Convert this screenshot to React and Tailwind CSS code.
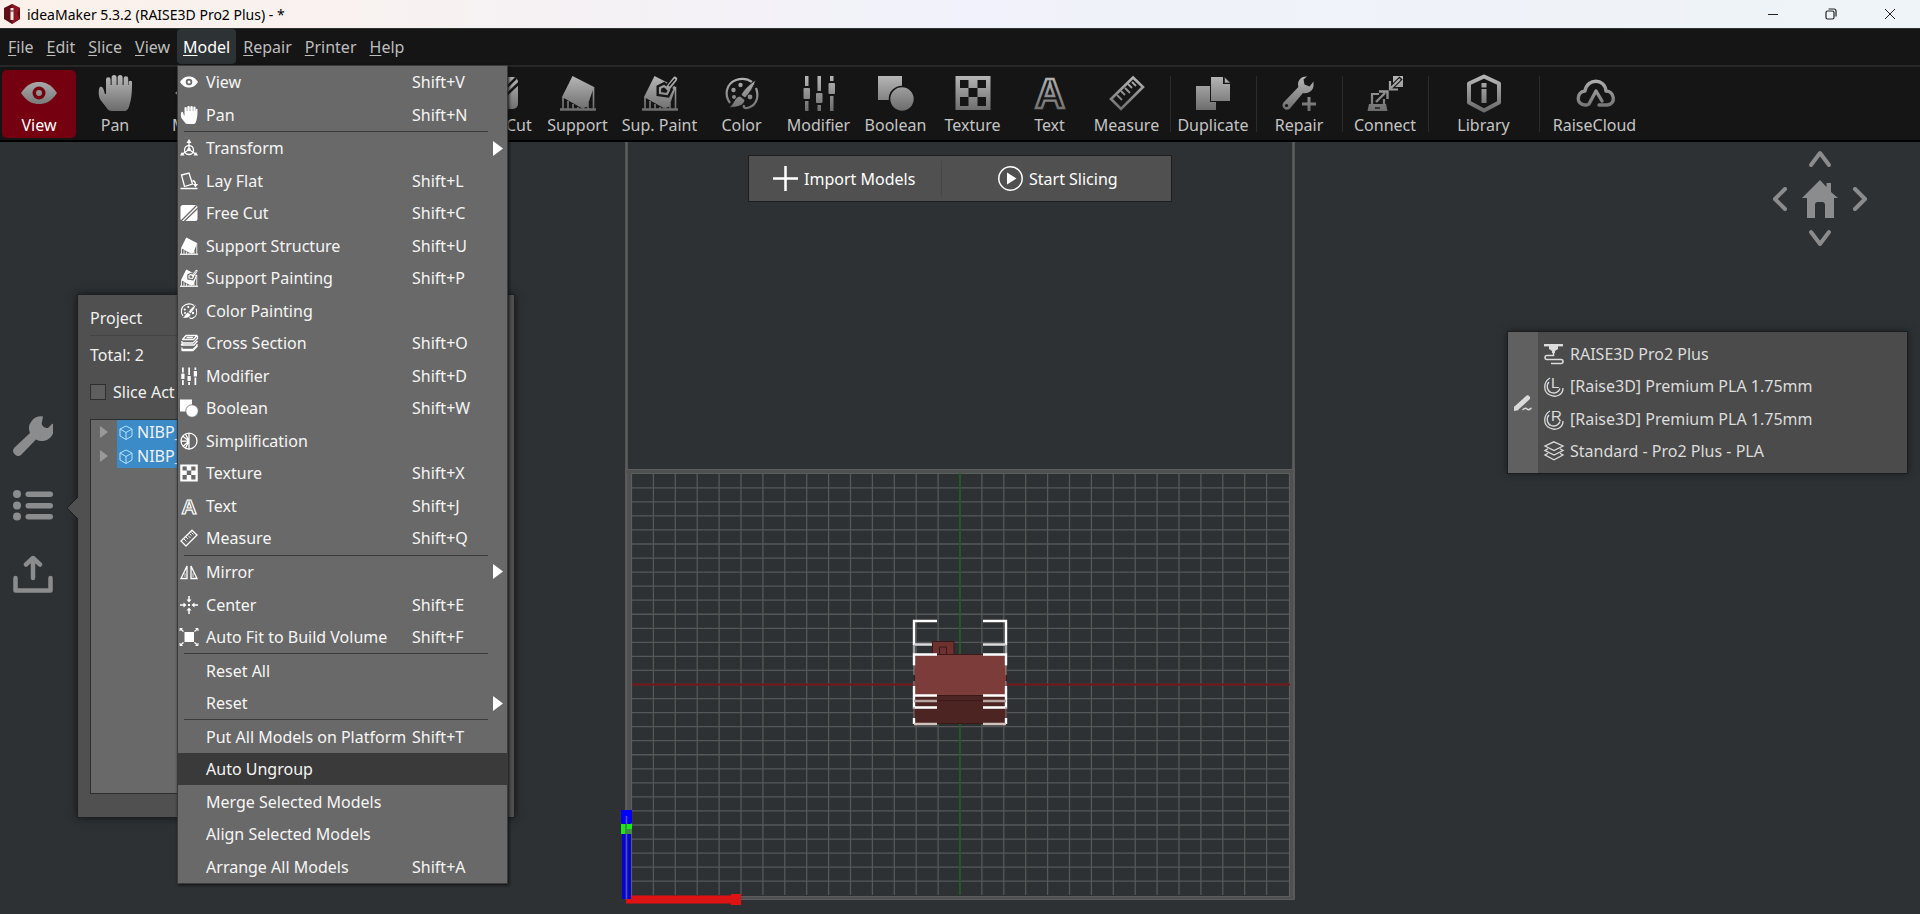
import React from 'react';
import clsx from 'clsx';

/* Icons share a 36x36 box. `c` is the paint, `k` the colour behind the icon. */
const icons = {
  view: ({ c, k }) => (
    <>
      <path d="M0 18C6 9 12 7 18 7s12 2 18 11c-6 9-12 11-18 11S6 27 0 18z" fill={c} />
      <circle cx="18" cy="18" r="6.5" fill={k} />
      <circle cx="18" cy="18" r="3" fill={c} />
    </>
  ),
  pan: ({ c }) => (
    <path
      d="M9 4.500a2.300 2.300 0 0 1 4.600 0V10h1V2.500a2.500 2.500 0 0 1 5 0V10h1V2.500a2.500 2.500 0 0 1 5 0V10h1V3.500a2.300 2.300 0 0 1 4.600 0V10h.5V6.500a2 2 0 0 1 3.300 0C35 16 35 22 32.500 30c-1 4-2.500 6-5 6H15c-3 0-4.500-1.500-6-4L3.500 25C1 21 1.500 13 3 12c2-1 3.500 1 4 4l1 3h1z"
      fill={c}
    />
  ),
  move: ({ c }) => (
    <path d="M18 0l6 7h-4v9h9v-4l7 6-7 6v-4h-9v9h4l-6 7-6-7h4v-9H7v4l-7-6 7-6v4h9V7h-4z" fill={c} />
  ),
  transform: ({ c }) => (
    <g fill="none" stroke={c} strokeWidth="2.600">
      <path d="M18 6v15L5 30M18 21l13 9" />
      <circle cx="18" cy="22" r="9" />
      <path d="M18 0l5 8H13zM0 33l4-7 5 7zM36 33l-4-7-5 7z" fill={c} stroke="none" />
      <circle cx="18" cy="21" r="3.500" fill={c} stroke="none" />
    </g>
  ),
  layFlat: ({ c }) => (
    <g fill="none" stroke={c} strokeWidth="2.600">
      <path d="M3 6l15-4 7 22-16 5z" />
      <path d="M1 33h34" strokeWidth="3" />
      <path d="M25 17c4 1 6 4 6 8" />
      <path d="M26 24h10l-5 7z" fill={c} stroke="none" />
    </g>
  ),
  freeCut: ({ c, k }) => (
    <>
      <rect x="1" y="2" width="34" height="32" rx="5" fill={c} />
      <path d="M2 34L33 3M8 35L36 8" stroke={k} strokeWidth="2.500" fill="none" />
    </>
  ),
  support: ({ c }) => (
    <>
      <path d="M12.500 1L34 12 27 32 21.500 33 2 22z" fill={c} />
      <path d="M3 22v12M8 26v8M13 29v5M18 32v2M23.500 31v3M28 28v6M33.500 12v22" stroke={c} strokeWidth="1.600" />
      <path d="M0 34.500h36" stroke={c} strokeWidth="2.400" />
    </>
  ),
  supPaint: ({ c, k }) => (
    <>
      <path d="M12.500 1L34 12 27 32 21.500 33 2 22z" fill={c} />
      <path d="M3 22v12M8 26v8M13 29v5M18 32v2M23.500 31v3M28 28v6M33.500 12v22" stroke={c} strokeWidth="1.600" />
      <path d="M0 34.500h36" stroke={c} strokeWidth="2.400" />
      <path d="M33 4L25 14M18 18v-5l4-2 5 4-2 4z" stroke={k} strokeWidth="7" fill="none" />
      <path d="M33 4L26 13" stroke={c} strokeWidth="4.500" strokeLinecap="round" />
      <path d="M33 4L27 11" stroke={k} strokeWidth="1.400" />
      <path d="M18 18v-5l4-2 5 4-2 4z" stroke={c} strokeWidth="2.200" fill="none" />
    </>
  ),
  color: ({ c, k }) => (
    <>
      <path d="M6 28C0 20 2 9 12 5c6-2 12-1 16 2M32 13c3 8 1 16-6 19-4 2-7 1-6-2" stroke={c} strokeWidth="2.200" fill="none" />
      <circle cx="9.500" cy="15" r="2.200" fill={c} />
      <circle cx="16.500" cy="10" r="2.200" fill={c} />
      <circle cx="10" cy="22" r="2" fill={c} />
      <circle cx="26" cy="22" r="2.400" fill={c} />
      <path d="M32 5c-5 3-12 9-15 15l4 3C26 18 30 11 32 5z" fill={c} stroke={k} strokeWidth="0.800" />
      <path d="M16 21l5 4c-1 6-9 8-16 7 5-2 5-10 11-11z" fill={c} stroke={k} strokeWidth="0.800" />
    </>
  ),
  crossSection: ({ c }) => (
    <g fill="none" stroke={c} strokeWidth="2.600" strokeLinejoin="round">
      <path d="M12 3h22l-7 8H5z" />
      <path d="M4 14v4h22l9-9v-5M13 7h13" />
      <path d="M2 22h26l7-8M2 22l4-3" />
      <path d="M4 27v6h22l8-8v-5" />
      <path d="M4 31h22l8-8" />
    </g>
  ),
  modifier: ({ c }) => (
    <g fill={c}>
      <path d="M4 1h3.500v10H4zM4 26h3.500v10H4zM16.500 1H20v15h-3.500zM16.500 30H20v6h-3.500zM29 1h3.500v5H29zM29 21h3.500v15H29z" />
      <rect x="2.500" y="13" width="6.500" height="11" rx="1" />
      <rect x="15" y="18" width="6.500" height="10" rx="1" />
      <rect x="27.500" y="8" width="6.500" height="11" rx="1" />
    </g>
  ),
  boolean: ({ c, k }) => (
    <>
      <rect x="0" y="1" width="24" height="24" fill={c} />
      <circle cx="24" cy="24" r="12.500" fill={c} stroke={k} strokeWidth="1.600" />
    </>
  ),
  simplification: ({ c }) => (
    <g fill="none" stroke={c} strokeWidth="2.500">
      <circle cx="18" cy="18" r="16" />
      <path d="M18 2v32M18 18L5 8M18 18L2 18M18 18L6 29M18 18L11 4M18 18l-7 14" />
    </g>
  ),
  texture: ({ c, k }) => (
    <>
      <rect x="0.500" y="1" width="35" height="34" fill={c} />
      <path d="M5 5h8.500v8H5zM22.500 5H31v8h-8.500zM13.500 13h9v9h-9zM5 22h8.500v9H5zM22.500 22H31v9h-8.500z" fill={k} />
    </>
  ),
  text: ({ c }) => (
    <text
      x="18"
      y="33"
      textAnchor="middle"
      fill="none"
      stroke={c}
      strokeWidth="2.400"
      className="font-['Liberation_Sans'] text-[42px] font-bold"
    >
      A
    </text>
  ),
  measure: ({ c }) => (
    <g fill="none" stroke={c} strokeWidth="2.600">
      <path d="M24 2.500L34 12 12 34 2 24z" />
      <path d="M8 20l5 5M12 16l4 4M16 13l5 5M19 9l4 4M23 7l4 4" strokeWidth="1.800" />
    </g>
  ),
  mirror: ({ c }) => (
    <g fill="none" stroke={c} strokeWidth="2.600">
      <path d="M14 6v25H2zM22 6v25h12z" />
      <path d="M10 20v8M26 20v8" strokeWidth="1.500" />
    </g>
  ),
  center: ({ c }) => (
    <g stroke={c} strokeWidth="3" fill={c}>
      <path d="M18 0v8M18 28v8M0 18h8M28 18h8" />
      <path d="M13 7h10l-5 6zM13 29h10l-5-6zM7 13v10l6-5zM29 13v10l-6-5z" stroke="none" />
      <path d="M16 16h4v4h-4z" stroke="none" />
    </g>
  ),
  autoFit: ({ c }) => (
    <>
      <rect x="9" y="8" width="19" height="20" fill={c} />
      <path d="M0 1l7 6M36 1l-7 6M0 35l7-6M36 35l-7-6" stroke={c} strokeWidth="2.600" />
      <path d="M0 6V1h5M36 6V1h-5M0 30v5h5M36 30v5h-5" stroke={c} strokeWidth="2" fill="none" />
    </>
  ),
  duplicate: ({ c, k }) => (
    <>
      <path d="M1 11h14v16h6v8H1z" fill={c} />
      <path d="M16 2h12v7h7v17H16z" fill={c} />
      <path d="M29.500 2l6 6h-6z" fill={c} stroke={k} strokeWidth="0.500" />
    </>
  ),
  repair: ({ c, k }) => (
    <>
      <path
        d="M26 1.500c-5-.5-9 3-9 8 0 1 .2 2 .4 2.600L2.500 27.500a4.500 4.500 0 0 0 6 6.500L22 18c5 1 10-2 10.500-7V6.500l-4 5-5-2-1-5z"
        fill={c}
      />
      <circle cx="5.500" cy="30.500" r="1.600" fill={k} />
      <path d="M28 22v14M21 29h14" stroke={c} strokeWidth="3" />
    </>
  ),
  connect: ({ c, k }) => (
    <>
      <path d="M5 29V19h7M17 24v5" stroke={c} strokeWidth="2.200" fill="none" />
      <path d="M2 29h17l1.500 7H.5z" fill={c} />
      <path d="M8 33h5" stroke={k} strokeWidth="1.400" />
      <path d="M9 27l9-9M12 16.500h8.500V24" stroke={c} strokeWidth="2.400" fill="none" />
      <path d="M26 1h10v11H26z" fill={c} />
      <path d="M34 3l-9 9" stroke={k} strokeWidth="4.500" />
      <path d="M33 4l-9 9M23 6v8.500h8" stroke={c} strokeWidth="2.200" fill="none" />
    </>
  ),
  library: ({ c }) => (
    <>
      <path d="M18 1.500L33 8.500v19L18 35.500 3 27.500v-19z" fill="none" stroke={c} strokeWidth="4" strokeLinejoin="round" />
      <rect x="15.500" y="8" width="5" height="4.500" fill={c} />
      <rect x="15.500" y="14" width="5" height="14" fill={c} />
    </>
  ),
  cloud: ({ c }) => (
    <path
      d="M10 30H8c-9 0-9-13 0-14C10 3 28 3 29 16c8 0 11 13 1 14h-8M12 29l7-13 6 10"
      fill="none"
      stroke={c}
      strokeWidth="3.400"
      strokeLinejoin="round"
      strokeLinecap="round"
    />
  ),
};

const Icon = ({ name, className, c = '#fff', k = '#696969' }) => {
  const Shape = icons[name];
  return (
    <svg viewBox="0 0 36 36" className={clsx('shrink-0 overflow-visible', className)} aria-hidden="true">
      <Shape c={c} k={k} />
    </svg>
  );
};

const menus = ['File', 'Edit', 'Slice', 'View', 'Model', 'Repair', 'Printer', 'Help'];

const modelMenu = [
  { label: 'View', keys: 'Shift+V', icon: 'view' },
  { label: 'Pan', keys: 'Shift+N', icon: 'pan' },
  null,
  { label: 'Transform', icon: 'transform', sub: true },
  { label: 'Lay Flat', keys: 'Shift+L', icon: 'layFlat' },
  { label: 'Free Cut', keys: 'Shift+C', icon: 'freeCut' },
  { label: 'Support Structure', keys: 'Shift+U', icon: 'support' },
  { label: 'Support Painting', keys: 'Shift+P', icon: 'supPaint' },
  { label: 'Color Painting', icon: 'color' },
  { label: 'Cross Section', keys: 'Shift+O', icon: 'crossSection' },
  { label: 'Modifier', keys: 'Shift+D', icon: 'modifier' },
  { label: 'Boolean', keys: 'Shift+W', icon: 'boolean' },
  { label: 'Simplification', icon: 'simplification' },
  { label: 'Texture', keys: 'Shift+X', icon: 'texture' },
  { label: 'Text', keys: 'Shift+J', icon: 'text' },
  { label: 'Measure', keys: 'Shift+Q', icon: 'measure' },
  null,
  { label: 'Mirror', icon: 'mirror', sub: true },
  { label: 'Center', keys: 'Shift+E', icon: 'center' },
  { label: 'Auto Fit to Build Volume', keys: 'Shift+F', icon: 'autoFit' },
  null,
  { label: 'Reset All' },
  { label: 'Reset', sub: true },
  null,
  { label: 'Put All Models on Platform', keys: 'Shift+T' },
  { label: 'Auto Ungroup', active: true },
  { label: 'Merge Selected Models' },
  { label: 'Align Selected Models' },
  { label: 'Arrange All Models', keys: 'Shift+A' },
];

const tools = [
  { label: 'Support', icon: 'support', width: 'w-[77px]' },
  { label: 'Sup. Paint', icon: 'supPaint', width: 'w-[87px]' },
  { label: 'Color', icon: 'color', width: 'w-[77px]' },
  { label: 'Modifier', icon: 'modifier', width: 'w-[77px]' },
  { label: 'Boolean', icon: 'boolean', width: 'w-[77px]' },
  { label: 'Texture', icon: 'texture', width: 'w-[77px]' },
  { label: 'Text', icon: 'text', width: 'w-[77px]' },
  { label: 'Measure', icon: 'measure', width: 'w-[77px]' },
];

const services = [
  { label: 'Duplicate', icon: 'duplicate', width: 'w-[86px]' },
  { label: 'Repair', icon: 'repair', width: 'w-[86px]' },
  { label: 'Connect', icon: 'connect', width: 'w-[86px]' },
  { label: 'Library', icon: 'library', width: 'w-[111px]' },
  { label: 'RaiseCloud', icon: 'cloud', width: 'w-[111px]' },
];

const TitleBar = () => (
  <header className="flex h-[28px] shrink-0 items-center bg-linear-to-r from-[#fcf1ea] via-[#f1f2fb] to-[#eef4f7] pl-[3px] text-black">
    <svg viewBox="0 0 18 20" className="h-[20px] w-[18px]" aria-hidden="true">
      <path d="M9 0l8 4v11l-8 5-8-5V4z" fill="#5e0d16" />
      <path d="M9 0l8 4-3 6 3 5-8 5z" fill="#8e1622" />
      <path d="M7.500 4h3v2.500h-3zM7.500 7.500h3V16h-3z" fill="#f4e9e6" />
    </svg>
    <h1 className="ml-[6px] pt-px text-[14px] leading-[20px]">ideaMaker 5.3.2 (RAISE3D Pro2 Plus) - *</h1>
    <div className="ml-auto flex">
      <button aria-label="Minimize" className="flex h-[28px] w-[58px] items-center justify-center">
        <svg viewBox="0 0 12 12" className="size-3"><path d="M1 6.500h10" stroke="#222" /></svg>
      </button>
      <button aria-label="Restore" className="flex h-[28px] w-[58px] items-center justify-center">
        <svg viewBox="0 0 12 12" className="size-3" fill="none" stroke="#222" strokeWidth="1.200">
          <rect x="1" y="3" width="8" height="8" rx="1.500" />
          <path d="M3.500 1H9a2 2 0 0 1 2 2v5.500" />
        </svg>
      </button>
      <button aria-label="Close" className="flex h-[28px] w-[60px] items-center justify-center">
        <svg viewBox="0 0 12 12" className="size-3"><path d="M1 1l10 10M11 1L1 11" stroke="#222" /></svg>
      </button>
    </div>
  </header>
);

const ModelMenu = () => (
  <div
    role="menu"
    className="absolute top-[36px] left-0 z-20 flex h-[819px] w-[331px] flex-col border border-[#3a3a3a] bg-[#696969] text-[#f6f6f6] shadow-[1px_1px_3px_#111]"
  >
    {modelMenu.map((item, i) =>
      item ? (
        <button
          key={item.label}
          role="menuitem"
          className={clsx('flex flex-1 items-center pr-[4px] pl-[2px] text-left', item.active && 'bg-[#3a3a3a]')}
        >
          <span className="flex w-[26px]">{item.icon && <Icon name={item.icon} className="size-[18px]" />}</span>
          <span className="w-[206px] whitespace-nowrap">{item.label}</span>
          <span className="flex-1">{item.keys}</span>
          {item.sub && (
            <svg viewBox="0 0 10 15" className="h-[15px] w-[10px]" aria-hidden="true">
              <path d="M0 0l10 7.500L0 15z" fill="#fff" />
            </svg>
          )}
        </button>
      ) : (
        <hr key={i} className="mr-[19px] ml-[6px] border-[#3c3c3c]" />
      )
    )}
  </div>
);

const MenuBar = () => (
  <nav className="flex h-[37px] shrink-0 gap-px border-t border-[#2d3330] bg-[#151515] pl-[2px] text-[#bdbdbd]">
    {menus.map((name) => {
      const open = name === 'Model';
      return (
        <div key={name} className="relative">
          <button
            className={clsx(
              'h-[35px] rounded-[4px] px-[6px]',
              open && 'bg-[#2d3235] text-white'
            )}
          >
            <span className="underline decoration-1 underline-offset-2">{name[0]}</span>
            {name.slice(1)}
          </button>
          {open && <ModelMenu />}
        </div>
      );
    })}
  </nav>
);

const Tool = ({ label, icon, width, active }) => (
  <button
    className={clsx(
      'flex h-[68px] shrink-0 flex-col items-center gap-[3px] pt-[5px] whitespace-nowrap',
      width,
      active ? 'rounded-[5px] bg-[#75000f] text-white' : 'text-[#c4c4c4]'
    )}
  >
    <Icon name={icon} c="url(#metal)" k={active ? '#75000f' : '#151515'} className="size-[36px]" />
    <span className="leading-[22px]">{label}</span>
  </button>
);

const ToolBar = () => (
  <div className="flex h-[77px] shrink-0 items-center border-t-2 border-b-2 border-t-[#272727] border-b-black bg-[#151515] pl-[2px]">
    <svg className="absolute size-0" aria-hidden="true">
      <defs>
        <linearGradient id="metal" gradientUnits="userSpaceOnUse" x1="0" y1="0" x2="0" y2="36">
          <stop offset="0" stopColor="#b8b8b8" />
          <stop offset="1" stopColor="#6c6c6c" />
        </linearGradient>
      </defs>
    </svg>
    <Tool label="View" icon="view" width="w-[74px]" active />
    <Tool label="Pan" icon="pan" width="w-[78px]" />
    <Tool label="Move" icon="move" width="w-[77px]" />
    <Tool label="Free Cut" icon="freeCut" width="ml-[231px] w-[77px]" />
    {tools.map((tool) => (
      <Tool key={tool.label} {...tool} />
    ))}
    <div className="ml-[5px] flex items-center">
      {services.map((tool) => (
        <div key={tool.label} className="flex items-center">
          <div className="-mr-px h-[56px] w-px bg-[#2b2b2b]" />
          <Tool {...tool} />
        </div>
      ))}
    </div>
  </div>
);

const steps = Array.from({ length: 29 }, (_, i) => i - 14);

/* Build volume seen from the top */
const BuildPlate = () => (
  <div className="absolute inset-0 flex justify-center overflow-hidden">
    <svg viewBox="0 1 680 772" className="h-[772px] w-[680px] shrink-0" aria-label="Build plate">
      <g stroke="#565858" strokeWidth="1.300">
        {steps.map((n) => (
          <path key={n} d={`M${340 + n * 21.9} 332V754M12 ${543.5 + n * 14.05}H670`} />
        ))}
      </g>
      <g fill="none" stroke="#5c5d5d">
        <path d="M6.500 0V758M673.500 0V758" strokeWidth="2.600" />
        <path d="M6 330H674M6 757H674" strokeWidth="4" stroke="#4f5151" />
        <path d="M10 330V757M671 330V757" strokeWidth="4" stroke="#4f5151" />
        <path d="M6 328.500H674V758.500H6z" strokeWidth="1.200" />
        <path d="M11.500 332.500H669.500V755.500H11.500z" strokeWidth="1.200" />
      </g>
      <path d="M340 332V754" stroke="#155e17" strokeWidth="1.300" />
      <path d="M12 543.500H670" stroke="#751416" strokeWidth="2" />

      {/* axes */}
      <path d="M6 754.500H111V753h10v11h-10v-1.500H6z" fill="#e31212" />
      <path d="M6 758.500H121" stroke="#c51c1c" />
      <path d="M2 669h9v89H2z" fill="#0505d2" />
      <path d="M1 669h11v13H1z" fill="#0000fa" />
      <path d="M6.500 675V758" stroke="#5555a8" strokeWidth="1.600" />
      <path d="M1 683h11v10H1z" fill="#19ea19" />
      <path d="M5 683h2v10H5zM7 688h5v5H7z" fill="#3f8f43" />

      {/* models */}
      <g stroke="#3b1918" strokeWidth="1">
        <path d="M312.500 500.500h21.500v14h-21.500z" fill="#6d312f" />
        <path d="M319.500 514v-8h7v8" fill="none" />
        <path d="M294.500 513.500h92v41h-92z" fill="#7c3c39" />
        <path d="M294.500 554.500h92v28h-92zM294.500 559.500h92" fill="#4c2422" />
      </g>
      <g fill="none" stroke="#fff" strokeWidth="2.400">
        <path d="M317 480H294v24M363 480h23v24" />
        <path d="M294 503.500h18M363 503.500h23" stroke="#dcdcdc" />
        <path d="M294 504v9M386 504v9" stroke="#a3a3a3" />
        <path d="M317 513.500H294v11M363 513.500h23v11" />
        <path d="M294 524v10M294 540v6M386 524v10M386 540v6" stroke="#a59b99" strokeWidth="1" />
        <path d="M294 545v21.500h23M386 545v21.500h-23M294 554.500h23M363 554.500h23" />
        <path d="M294 560h23M363 560h23" stroke="#b9a5a3" />
        <path d="M294 566v11M386 566v11" stroke="#8a7b79" strokeWidth="1" />
        <path d="M294 577v6M386 577v6" />
        <path d="M294 583h23M363 583h23" stroke="#cfc4bd" />
      </g>
    </svg>
  </div>
);

const SideTools = () => (
  <aside className="flex w-[40px] flex-col gap-[34px] pt-[274px] text-[#8b8c8d]">
    <button aria-label="Settings">
      <svg viewBox="0 0 40 40" className="size-[40px]" fill="currentColor">
        <path d="M30 .5a12 12 0 0 0-13 16.500L1.500 31.500a5 5 0 0 0 6.500 7.500L23 23.500A12 12 0 0 0 39.500 7.500l-4 4c-3 2-8-2-6.500-5.500z" />
      </svg>
    </button>
    <button aria-label="Project list">
      <svg viewBox="0 0 40 31" className="h-[31px] w-[40px]" fill="currentColor">
        {[4, 15.5, 26.500].map((y) => (
          <g key={y}>
            <circle cx="4" cy={y} r="4" />
            <rect x="12.500" y={y - 2.500} width="27.500" height="5.500" rx="2.700" />
          </g>
        ))}
      </svg>
    </button>
    <button aria-label="Upload">
      <svg viewBox="0 0 40 38" className="h-[38px] w-[40px]" fill="none" stroke="currentColor" strokeWidth="4.500" strokeLinecap="round" strokeLinejoin="round">
        <path d="M2.500 23v12.500h35V23M20 23V3M13 9.500L20 3l7 6.500" />
      </svg>
    </button>
  </aside>
);

const ProjectPanel = () => (
  <section className="relative mt-[152px] ml-[24px] flex h-[524px] w-[438px] flex-col border border-[#1e1f20] bg-[#505050] px-[12px] pt-[12px] pb-[23px] text-[#f0f0f0] shadow-[0_0_8px_#15181a]">
    <svg viewBox="0 0 12 24" className="absolute top-[201px] -left-[12px] h-[24px] w-[12px]" aria-hidden="true">
      <path d="M12 1L1 12l11 11" fill="#505050" stroke="#1e1f20" />
    </svg>
    <h2 className="leading-[22px]">Project</h2>
    <hr className="mt-[6px] border-[#434343]" />
    <p className="mt-[8px] leading-[22px]">Total: 2</p>
    <label className="mt-[15px] flex items-center gap-[7px] leading-[22px]">
      <input type="checkbox" className="size-[16px] appearance-none border border-[#2e2e2e] bg-[#5e5e5e]" />
      Slice Act
    </label>
    <ul className="mt-[16px] flex-1 border border-[#2e2e2e] bg-[#696969]">
      {[1, 2].map((n) => (
        <li key={n} className="flex h-[24px] items-center">
          <svg viewBox="0 0 8 12" className="mx-[9px] h-[12px] w-[8px]" aria-hidden="true">
            <path d="M0 0l8 6-8 6z" fill="#9a9a9a" />
          </svg>
          <span className="flex h-full flex-1 items-center bg-[#3b8bc9] pl-[2px]">
            <svg viewBox="0 0 14 15" className="mr-[4px] h-[15px] w-[14px]" fill="none" stroke="#b5e2ff" aria-hidden="true">
              <path d="M7 1l6 3v7l-6 3.500L1 11V4zM1 4l6 3.500L13 4M7 7.500v7" />
            </svg>
            NIBP_
          </span>
        </li>
      ))}
    </ul>
  </section>
);

const ActionBar = () => (
  <div className="absolute top-[13px] left-1/2 flex h-[47px] w-[424px] -translate-x-1/2 items-center border border-[#1c1d1e] bg-[#505050] text-white">
    <button className="flex h-full w-[192px] items-center gap-[6px] pl-[24px]">
      <svg viewBox="0 0 25 25" className="size-[25px]" aria-hidden="true">
        <path d="M12.500 0v25M0 12.500h25" stroke="#fff" strokeWidth="2.500" />
      </svg>
      Import Models
    </button>
    <div className="h-[36px] w-px bg-[#474747]" />
    <button className="flex h-full flex-1 items-center gap-[6px] pl-[56px]">
      <svg viewBox="0 0 25 25" className="size-[25px]" aria-hidden="true">
        <circle cx="12.500" cy="12.500" r="11.700" fill="none" stroke="#fff" strokeWidth="1.500" />
        <path d="M9 6.500l9.500 6-9.500 6z" fill="#fff" />
      </svg>
      Start Slicing
    </button>
  </div>
);

const Arrow = ({ label, d, className }) => (
  <button aria-label={label} className={clsx('flex justify-center', className)}>
    <svg viewBox="0 0 24 24" className="size-[24px]" fill="none" stroke="currentColor" strokeWidth="4" strokeLinecap="round" strokeLinejoin="round">
      <path d={d} />
    </svg>
  </button>
);

const ViewNav = () => (
  <div className="mr-[48px] grid w-[104px] grid-cols-[24px_1fr_24px] items-center text-[#8b8c8d]">
    <Arrow label="Up" d="M3 17l9-12 9 12" className="col-span-3" />
    <Arrow label="Left" d="M17 2L7 12l10 10" />
    <button aria-label="Home" className="my-[8px] flex justify-center">
      <svg viewBox="0 0 36 38" className="h-[38px] w-[36px]" fill="currentColor">
        <path d="M18 0l6.500 7V3H29v9l7 6h-4v20h-9V25c0-2-1-3-2.500-3h-5C14 22 13 23 13 25v13H5V18H0z" />
      </svg>
    </button>
    <Arrow label="Right" d="M7 2l10 10L7 22" />
    <Arrow label="Down" d="M3 6l9 12 9-12" className="col-span-3" />
  </div>
);

const Spool = ({ letter }) => (
  <>
    <path d="M6 2C-1 6-1 16 6 19c6 3 13 0 13-7" />
    <path d="M5 6c-3 3-2 9 2 10.500 4 1.500 8-.5 9-4" />
    <text x="7" y="12" fill="currentColor" stroke="none" className="font-['Liberation_Sans'] text-[15px]">{letter}</text>
  </>
);

const profile = [
  {
    label: 'RAISE3D Pro2 Plus',
    art: (
      <>
        <path d="M0 1.200h19" strokeWidth="2.400" />
        <path d="M5 2h9v3l-3 2v2H8V7L5 5z" fill="currentColor" stroke="none" />
        <path d="M9.500 9v2.500H3a2 2 0 0 0 0 4h14a2 2 0 0 1 0 4H7" strokeWidth="1.500" />
      </>
    ),
  },
  { label: '[Raise3D] Premium PLA 1.75mm', art: <Spool letter="L" /> },
  { label: '[Raise3D] Premium PLA 1.75mm', art: <Spool letter="R" /> },
  {
    label: 'Standard - Pro2 Plus - PLA',
    art: <path d="M10 .8l9 4.200-9 4.500-9-4.500zM4 7.800L1 9.500l9 4.500 9-4.500-3-1.700M4 12.300L1 14l9 4.800L19 14l-3-1.700" />,
  },
];

const ProfilePanel = () => (
  <section className="mt-[81px] mr-[12px] flex h-[143px] w-[401px] border border-[#1c1d1e] bg-[#4a4b4a] text-[#dcdcdc] shadow-[0_0_8px_#1a1d1f]">
    <button aria-label="Edit profile" className="flex w-[30px] items-center justify-center bg-[#5f605f]">
      <svg viewBox="0 0 18 16" className="h-[16px] w-[18px]" fill="none" stroke="#dadada" strokeLinecap="round" aria-hidden="true">
        <path d="M3 12.500L13.500 3" strokeWidth="5" />
        <path d="M0 16v-5l5 4z" fill="#dadada" stroke="none" />
        <path d="M9 14.500c2-2 3-1.500 4-.5s2.500 1 4-.7" strokeWidth="1.600" />
      </svg>
    </button>
    <ul className="flex flex-1 flex-col py-[6px] pl-[6px]">
      {profile.map((row, i) => (
        <li key={i} className="flex flex-1 items-center gap-[6px]">
          <svg viewBox="0 0 20 20" className="size-[20px] overflow-visible" fill="none" stroke="currentColor" strokeWidth="1.300" aria-hidden="true">
            {row.art}
          </svg>
          {row.label}
        </li>
      ))}
    </ul>
  </section>
);

export default function App() {
  return (
    <div className="flex h-screen flex-col overflow-hidden bg-[#2d3134] font-['Noto_Sans',sans-serif] text-[16px]">
      <TitleBar />
      <MenuBar />
      <ToolBar />
      <main className="relative flex min-h-0 flex-1 items-start justify-between">
        <BuildPlate />
        <div className="relative flex pl-[13px]">
          <SideTools />
          <ProjectPanel />
        </div>
        <ActionBar />
        <div className="relative flex flex-col items-end pt-[6px]">
          <ViewNav />
          <ProfilePanel />
        </div>
      </main>
    </div>
  );
}
